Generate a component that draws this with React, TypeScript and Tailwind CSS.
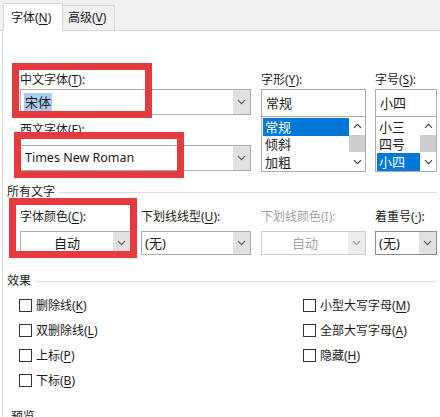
import React from "react";

const FONT = "font-['Noto_Sans','Noto_Sans_CJK_SC',sans-serif]";

function Key({ k }: { k: string }) {
  return <span className="underline underline-offset-[2px] decoration-1">{k}</span>;
}

function Chevron({ dir = "down", color = "#5a5a5a" }: { dir?: "down" | "up"; color?: string }) {
  return (
    <svg width="9" height="6" viewBox="0 0 9 6" className="block">
      <path
        d={dir === "down" ? "M1 1.2l3.5 3.5L8 1.2" : "M1 4.8l3.5-3.5L8 4.8"}
        fill="none"
        stroke={color}
        strokeWidth="1.2"
      />
    </svg>
  );
}

function Combo({
  children,
  center,
  disabled,
  border = "border-[#adadad]",
  h = "h-[26px]",
}: {
  children?: React.ReactNode;
  center?: boolean;
  disabled?: boolean;
  border?: string;
  h?: string;
}) {
  return (
    <div className={`flex ${h} w-full border bg-white ${disabled ? "border-[#cfcfcf]" : border}`}>
      <div
        className={`flex flex-1 items-center px-[3px] ${center ? "justify-center" : ""} ${
          disabled ? "text-[#a3a3a3]" : "text-[#1a1a1a]"
        }`}
      >
        {children}
      </div>
      <div
        className={`flex w-[17px] items-center justify-center ${
          disabled ? "bg-[#ececec]" : "bg-[#e1e1e1]"
        }`}
      >
        <Chevron color={disabled ? "#a0a0a0" : "#5a5a5a"} />
      </div>
    </div>
  );
}

function ListBox({ items, selected }: { items: string[]; selected: number }) {
  return (
    <div className="flex h-[55px] w-full border border-t-0 border-[#adadad] bg-white">
      <div className="flex flex-1 flex-col pt-[1px] pl-[1px]">
        {items.map((it, i) => (
          <div
            key={it}
            className={`flex h-[17.5px] items-center px-[2px] text-[13px] ${
              i === selected ? "bg-[#0078d7] text-white" : "text-[#1a1a1a]"
            }`}
          >
            {it}
          </div>
        ))}
      </div>
      <div className="flex w-[16px] flex-col items-center bg-white">
        <div className="flex h-[18px] items-center justify-center">
          <Chevron dir="up" color="#404040" />
        </div>
        <div className="h-[17px] w-full bg-[#cdcdcd]" />
        <div className="flex flex-1 items-center justify-center">
          <Chevron color="#404040" />
        </div>
      </div>
    </div>
  );
}

function Section({ title, className = "" }: { title: string; className?: string }) {
  return (
    <div className={`flex items-center pl-[4px] ${className}`}>
      <span className="text-[#1a1a1a]">{title}</span>
      <div className="ml-[4px] mr-[3px] flex-1 border-t border-[#dcdcdc]" />
    </div>
  );
}

function Check({ children }: { children: React.ReactNode }) {
  return (
    <div className="flex h-[25px] items-center">
      <div className="h-[13px] w-[13px] border border-[#333] bg-white" />
      <span className="ml-[4px] text-[#1a1a1a]">{children}</span>
    </div>
  );
}

export default function App() {
  return (
    <div className={`relative h-[417px] w-[440px] overflow-hidden bg-white text-[12px] leading-[18px] ${FONT}`}>
      {/* tabs */}
      <div className="flex h-[31px] items-end border-b border-[#d9d9d9] bg-[#f0f0f0] pl-[3px]">
        <div className="relative top-[1px] flex h-[28px] w-[60px] items-center border border-b-0 border-[#d9d9d9] bg-white pl-[7px] text-[#1a1a1a]">
          字体(<Key k="N" />)
        </div>
        <div className="flex h-[25px] w-[52px] items-center border border-l-0 border-b-0 border-[#d9d9d9] bg-[#f0f0f0] pl-[5px] text-[#1a1a1a]">
          高级(<Key k="V" />)
        </div>
      </div>

      {/* body */}
      <div className="ml-[2px] h-[386px] border-l border-[#d9d9d9]">
        <div className="flex pt-[40px] pl-[17px]">
          <div className="w-[231px]">
            <div className="h-[18px] text-[#1a1a1a]">
              中文字体(<Key k="T" />):
            </div>
            <Combo h="h-[26px]">
              <span className="bg-[#a9cdef] px-[1px] text-[13px] text-[#1a1a1a]">宋体</span>
            </Combo>
            <div className="mt-[6px] h-[18px] text-[#1a1a1a]">
              西文字体(<Key k="F" />):
            </div>
            <div className="mt-[6px]">
              <Combo h="h-[26px]">
                <span className="pl-[1px] text-[12.5px]">Times New Roman</span>
              </Combo>
            </div>
          </div>
          <div className="ml-[10px] w-[105px]">
            <div className="h-[18px] text-[#1a1a1a]">
              字形(<Key k="Y" />):
            </div>
            <div className="flex h-[28px] items-center border border-[#adadad] px-[4px] text-[13px] text-[#1a1a1a]">
              常规
            </div>
            <ListBox items={["常规", "倾斜", "加粗"]} selected={0} />
          </div>
          <div className="ml-[9px] w-[62px]">
            <div className="h-[18px] text-[#1a1a1a]">
              字号(<Key k="S" />):
            </div>
            <div className="flex h-[28px] items-center border border-[#adadad] px-[4px] text-[13px] text-[#1a1a1a]">
              小四
            </div>
            <ListBox items={["小三", "四号", "小四"]} selected={2} />
          </div>
        </div>

        <Section title="所有文字" className="mt-[11px]" />

        <div className="mt-[7px] flex pl-[17px]">
          <div className="w-[111px]">
            <div className="h-[18px] text-[#1a1a1a]">
              字体颜色(<Key k="C" />):
            </div>
            <div className="mt-[5px]">
              <Combo center h="h-[24px]">
                <span className="text-[13px]">自动</span>
              </Combo>
            </div>
          </div>
          <div className="ml-[10px] w-[110px]">
            <div className="h-[18px] text-[#1a1a1a]">
              下划线线型(<Key k="U" />):
            </div>
            <div className="mt-[5px]">
              <Combo h="h-[24px]">
                <span className="text-[13px]">(无)</span>
              </Combo>
            </div>
          </div>
          <div className="ml-[10px] w-[105px]">
            <div className="h-[18px] text-[#a3a3a3]">下划线颜色(I):</div>
            <div className="mt-[5px]">
              <Combo center disabled h="h-[24px]">
                <span className="text-[13px]">自动</span>
              </Combo>
            </div>
          </div>
          <div className="ml-[9px] w-[62px]">
            <div className="h-[18px] text-[#1a1a1a]">
              着重号(<Key k="·" />):
            </div>
            <div className="mt-[5px]">
              <Combo border="border-[#8c8c8c]" h="h-[24px]">
                <span className="text-[13px]">(无)</span>
              </Combo>
            </div>
          </div>
        </div>

        <Section title="效果" className="mt-[17px]" />

        <div className="mt-[3px] flex pl-[16px]">
          <div className="w-[284px]">
            <Check>
              删除线(<Key k="K" />)
            </Check>
            <Check>
              双删除线(<Key k="L" />)
            </Check>
            <Check>
              上标(<Key k="P" />)
            </Check>
            <Check>
              下标(<Key k="B" />)
            </Check>
          </div>
          <div>
            <Check>
              小型大写字母(<Key k="M" />)
            </Check>
            <Check>
              全部大写字母(<Key k="A" />)
            </Check>
            <Check>
              隐藏(<Key k="H" />)
            </Check>
          </div>
        </div>

        <Section title="预览" className="mt-[15px] pl-[8px]" />
      </div>

      {/* red annotation boxes */}
      <div className="absolute left-[12px] top-[63px] h-[55px] w-[140px] border-[7px] border-[#e63a3f]" />
      <div className="absolute left-[14px] top-[132px] h-[46px] w-[170px] border-[7px] border-[#e63a3f]" />
      <div className="absolute left-[9px] top-[198px] h-[60px] w-[128px] border-[7px] border-[#e63a3f]" />
    </div>
  );
}
